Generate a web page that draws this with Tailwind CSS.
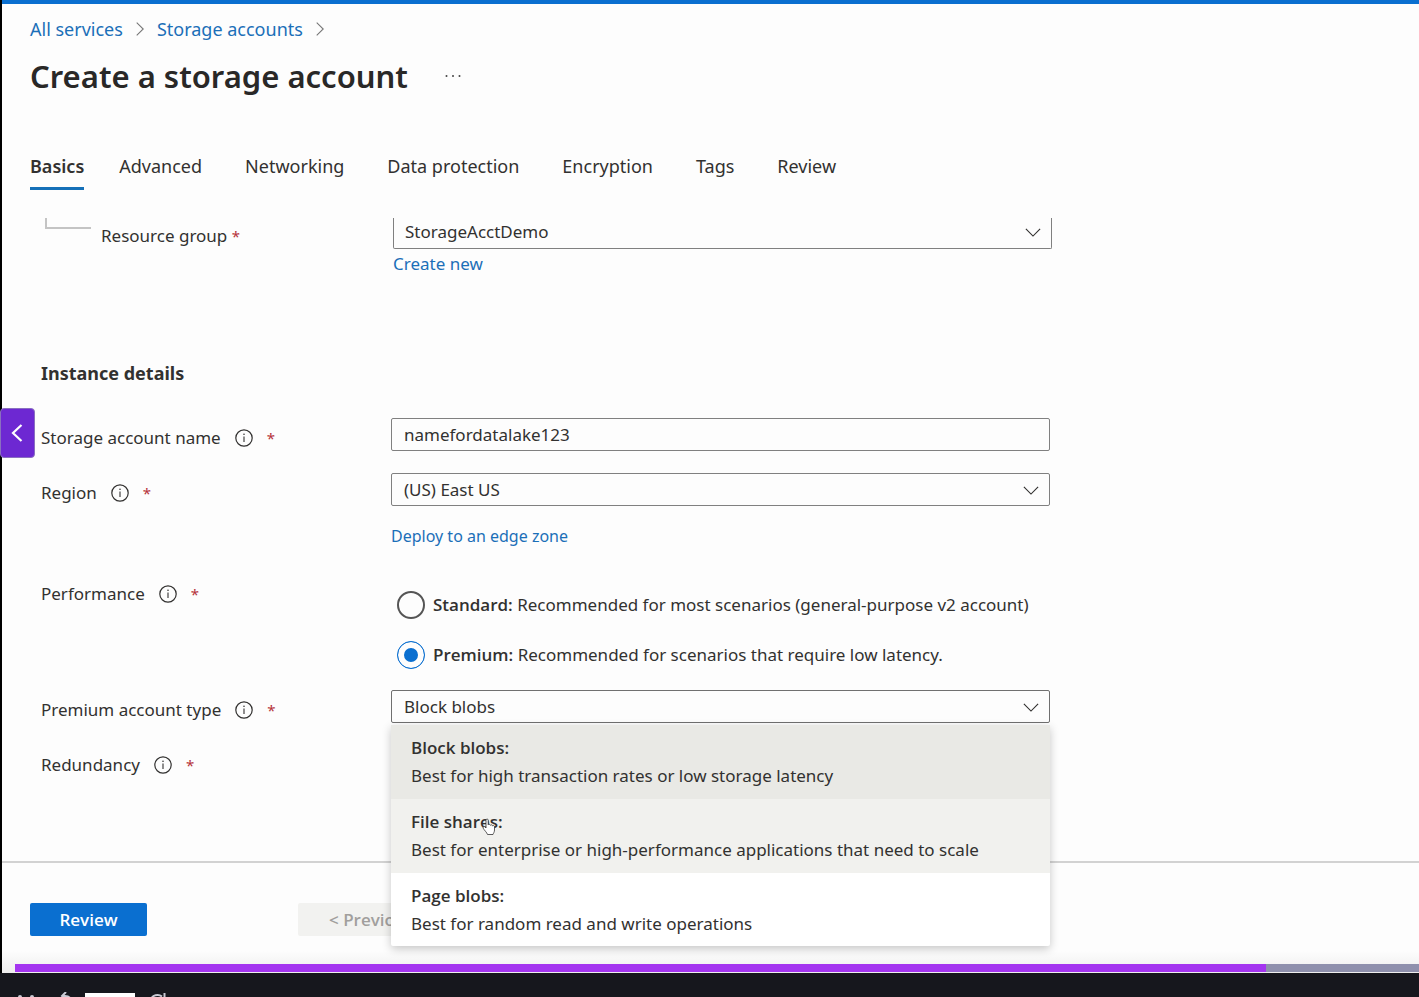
<!DOCTYPE html>
<html lang="en">
<head>
<meta charset="utf-8">
<title>Create a storage account</title>
<script src="https://cdn.jsdelivr.net/npm/@tailwindcss/browser@4"></script>
</head>
<body class="bg-[#fdfdfd] font-['Noto_Sans',sans-serif] text-[17px] leading-6 text-[#323130]">
<svg class="hidden">
  <symbol id="info" viewBox="0 0 18 18"><circle cx="9" cy="9" r="8.2" fill="none" stroke="currentColor" stroke-width="1.2"/><path d="M9 7.6V13" stroke="currentColor" stroke-width="1.1"/><circle cx="9" cy="5.3" r=".8" fill="currentColor"/></symbol>
  <symbol id="down" viewBox="0 0 18 10"><path d="M1 1l8 8 8-8" fill="none" stroke="currentColor" stroke-width="1.3"/></symbol>
  <symbol id="right" viewBox="0 0 8 14"><path d="M.7.7L7.2 7 .7 13.3" fill="none" stroke="currentColor" stroke-width="1.1"/></symbol>
</svg>
<div class="relative flex min-h-screen flex-col">
  <div class="relative flex flex-1 flex-col border-l-2 border-black">
    <div class="h-1 bg-[#0a6fd0]"></div>
    <header class="px-7">
      <nav aria-label="Breadcrumb" class="flex items-center gap-[13px] pt-[11px] text-[18px] leading-7 text-[#1b6fb8]">
        <a href="#">All services</a>
        <svg class="h-[14px] w-2 text-[#777]"><use href="#right"/></svg>
        <a href="#">Storage accounts</a>
        <svg class="h-[14px] w-2 text-[#777]"><use href="#right"/></svg>
      </nav>
      <div class="flex items-center gap-9 pt-[13px]">
        <h1 class="text-[31px] font-semibold leading-10 text-[#292827]">Create a storage account</h1>
        <button aria-label="More actions" class="flex gap-1">
          <svg class="h-1 w-[18px]" viewBox="0 0 18 4" fill="#444"><circle cx="2.5" cy="2" r="1"/><circle cx="9" cy="2" r="1"/><circle cx="15.5" cy="2" r="1"/></svg>
        </button>
      </div>
      <div role="tablist" class="flex gap-[43px] pt-[54px] text-[18px] leading-8">
        <button role="tab" aria-selected="true" class="-mr-2 border-b-3 border-[#1570b8] pb-[5px] font-semibold">Basics</button>
        <button role="tab" class="pb-2">Advanced</button>
        <button role="tab" class="pb-2">Networking</button>
        <button role="tab" class="pb-2">Data protection</button>
        <button role="tab" class="pb-2">Encryption</button>
        <button role="tab" class="pb-2">Tags</button>
        <button role="tab" class="pb-2">Review</button>
      </div>
    </header>

    <main class="flex-1 pt-7 pb-[84px]">
      <div class="flex pl-[43px]">
        <div class="flex w-[348px]">
          <div class="h-[11px] w-[46px] border-b-2 border-l-2 border-[#c4c4c4]"></div>
          <label for="rg" class="pt-[6px] pl-[10px]">Resource group <span class="text-[15px] text-[#b5333a]">*</span></label>
        </div>
        <div class="max-w-[659px] flex-1">
          <div class="relative">
            <select id="rg" class="block h-[31px] w-full appearance-none rounded-b-xs border border-t-0 border-[#808080] pb-[2px] pl-[11px]"><option>StorageAcctDemo</option></select>
            <svg class="pointer-events-none absolute right-[11px] top-[10px] h-[9px] w-4"><use href="#down"/></svg>
          </div>
          <a href="#" class="mt-[3px] block text-[#1b6fb8]">Create new</a>
        </div>
      </div>

      <h2 class="mt-[81px] pl-[39px] text-[18px] font-bold leading-8">Instance details</h2>

      <div class="mt-[29px] flex flex-col gap-[22px] pl-[39px]">
        <div class="flex">
          <div class="flex w-[350px] items-center gap-[14px] self-start pt-2"><label for="nm">Storage account name</label><svg class="size-[18px]"><use href="#info"/></svg><span class="text-[15px] text-[#b5333a]">*</span></div>
          <input id="nm" type="text" value="namefordatalake123" class="block h-[33px] min-w-0 max-w-[659px] flex-1 rounded-xs border border-[#808080] px-3">
        </div>
        <div class="flex">
          <div class="flex w-[350px] items-center gap-[14px] self-start pt-2"><label for="rgn">Region</label><svg class="size-[18px]"><use href="#info"/></svg><span class="text-[15px] text-[#b5333a]">*</span></div>
          <div class="max-w-[659px] flex-1">
            <div class="relative">
              <select id="rgn" class="block h-[33px] w-full appearance-none rounded-xs border border-[#808080] px-3"><option>(US) East US</option></select>
              <svg class="pointer-events-none absolute right-[11px] top-[13px] h-[9px] w-4"><use href="#down"/></svg>
            </div>
            <a href="#" class="mt-[18px] block text-[16px] text-[#1b6fb8]">Deploy to an edge zone</a>
          </div>
        </div>
        <div class="-mb-px mt-1 flex">
          <div class="flex w-[350px] items-center gap-[14px] self-start pt-2"><span id="perf">Performance</span><svg class="size-[18px]"><use href="#info"/></svg><span class="text-[15px] text-[#b5333a]">*</span></div>
          <div role="radiogroup" aria-labelledby="perf" class="flex flex-1 flex-col gap-[22px] pt-[17px] pl-[6px]">
            <label class="flex items-center gap-2"><input type="radio" name="perf" class="size-7 shrink-0 appearance-none rounded-full border-2 border-[#555]"><span><b class="font-['Open_Sans',sans-serif] font-semibold">Standard:</b> Recommended for most scenarios (general-purpose v2 account)</span></label>
            <label class="flex items-center gap-2"><input type="radio" name="perf" checked class="size-7 shrink-0 appearance-none rounded-full border border-[#0a6fd0] bg-[#0a6fd0] shadow-[inset_0_0_0_6px_#fdfdfd]"><span><b class="font-['Open_Sans',sans-serif] font-semibold">Premium:</b> Recommended for scenarios that require low latency.</span></label>
          </div>
        </div>
        <div class="flex">
          <div class="flex w-[350px] items-center gap-[14px] self-start pt-2"><label for="pat">Premium account type</label><svg class="size-[18px]"><use href="#info"/></svg><span class="text-[15px] text-[#b5333a]">*</span></div>
          <div class="relative max-w-[659px] flex-1">
            <select id="pat" class="block h-[33px] w-full appearance-none rounded-xs border border-[#707070] px-3"><option>Block blobs</option><option>File shares</option><option>Page blobs</option></select>
            <svg class="pointer-events-none absolute right-[11px] top-[13px] h-[9px] w-4"><use href="#down"/></svg>
            <ul role="listbox" aria-label="Premium account type" class="absolute inset-x-0 top-[35px] z-10 rounded-b-xs bg-white leading-7 shadow-[0_3px_10px_rgba(0,0,0,0.22)]">
              <li role="option" aria-selected="true" class="bg-[#e9e9e5] px-5 pt-[9px] pb-[9px]"><b class="block font-['Open_Sans',sans-serif] font-semibold">Block blobs:</b>Best for high transaction rates or low storage latency</li>
              <li role="option" class="relative bg-[#f1f1ee] px-5 pt-[9px] pb-[9px]"><b class="block font-['Open_Sans',sans-serif] font-semibold">File shares:</b>Best for enterprise or high-performance applications that need to scale
                <svg class="absolute left-[91px] top-[19px] h-[18px] w-[14px]" viewBox="0 0 14 18"><path d="M4 10V2.2C4 .6 6.2.6 6.2 2.2V7c.5-1 2-.8 2.2.3.6-.9 2-.6 2.1.6.8-.8 2-.4 2 .8V12c0 2-1 3-1.500 4.500H5.500C5 14.500 2 12 1.200 10.200.700 9 2.300 8 3.200 9z" fill="#fff" stroke="#333" stroke-width=".8"/></svg>
              </li>
              <li role="option" class="px-5 pt-[9px] pb-2"><b class="block font-['Open_Sans',sans-serif] font-semibold">Page blobs:</b>Best for random read and write operations</li>
            </ul>
          </div>
        </div>
        <div class="flex items-center gap-[14px] pt-2"><span>Redundancy</span><svg class="size-[18px]"><use href="#info"/></svg><span class="text-[15px] text-[#b5333a]">*</span></div>
      </div>
    </main>

    <footer class="flex gap-[151px] border-t-2 border-[#d2d2d2] bg-linear-to-b from-[#fdfdfd] from-80% to-[#eeeeee] px-7 pt-10 pb-[37px] font-['Open_Sans',sans-serif] font-semibold">
      <button class="h-[33px] w-[117px] rounded-xs bg-[#0a6fd0] text-white">Review</button>
      <button disabled class="h-[33px] w-[147px] rounded-xs bg-[#f2f2f0] text-[#a19f9d]">&lt; Previous</button>
    </footer>
    <div role="progressbar" aria-label="Video progress" aria-valuenow="89" class="absolute bottom-px left-[13px] right-0 h-2 bg-[#8f90ad]"><div class="h-full bg-[#a435f0]" style="width:89.1%"></div></div>
    <button aria-label="Previous lecture" class="absolute -left-[2px] top-[408px] flex h-[50px] w-[35px] items-center justify-center rounded-sm border border-[#8a6fc0] bg-[#6d28d2] pr-[2px]"><svg class="h-[18px] w-3" viewBox="0 0 12 18"><path d="M10.500 1L2 9l8.500 8" fill="none" stroke="#fff" stroke-width="2.200"/></svg></button>
  </div>
  <div class="flex h-6 items-start overflow-hidden bg-[#16171d] pl-[18px] text-[#c9cad4]">
    <button aria-label="Pause" class="mt-[22px] flex w-4 justify-between"><i class="h-4 w-1 rounded-sm bg-[#c9cad4]"></i><i class="h-4 w-1 rounded-sm bg-[#c9cad4]"></i></button>
    <button aria-label="Rewind" class="ml-[26px] mt-[19px]"><svg class="h-5 w-3" viewBox="0 0 12 20" fill="none" stroke="currentColor" stroke-width="2"><path d="M6 0L2 4l4 4M2 4h3q6 0 6 6t-6 6"/></svg></button>
    <div class="ml-[13px] mt-5 h-5 w-[50px] bg-white"></div>
    <button aria-label="Forward" class="ml-[14px] mt-5"><svg class="h-5 w-[18px]" viewBox="0 0 18 20" fill="none" stroke="currentColor" stroke-width="2"><path d="M13 3.500A7.500 7.500 0 1 0 16 9M15.500 0v5h-5"/></svg></button>
  </div>
</div>
</body>
</html>
